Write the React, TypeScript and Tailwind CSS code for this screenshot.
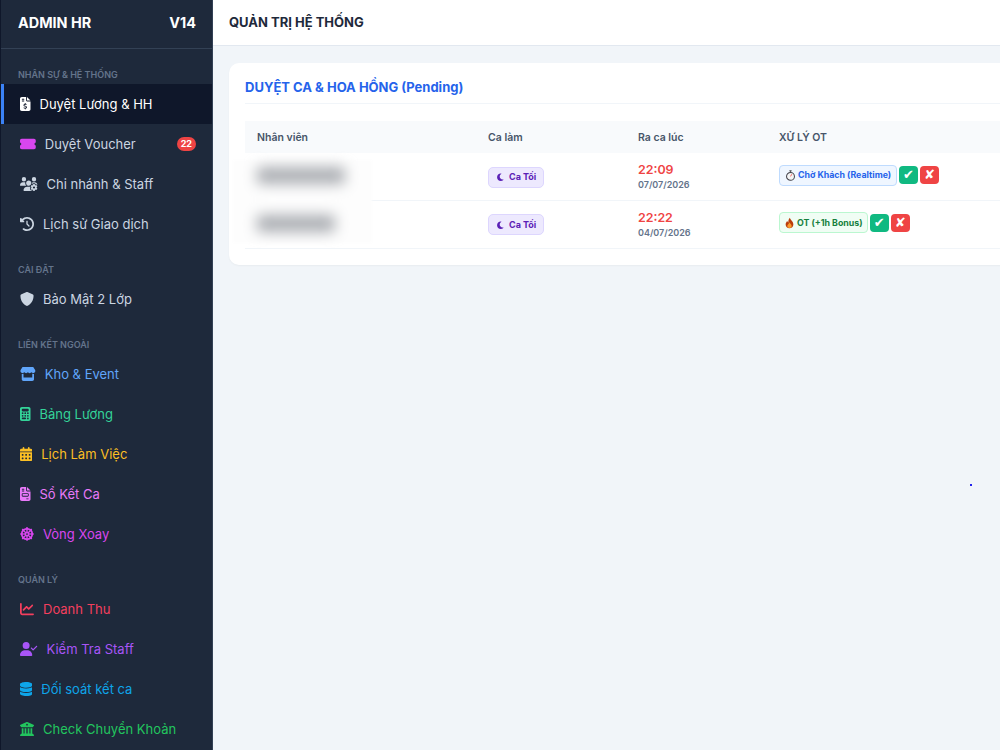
import React from "react";
import {
  FaCalculator,
  FaCalendarDays,
  FaChartLine,
  FaClockRotateLeft,
  FaDatabase,
  FaDharmachakra,
  FaFileInvoice,
  FaFileInvoiceDollar,
  FaMoon,
  FaShield,
  FaStore,
  FaTicketSimple,
  FaBuildingColumns,
  FaUserCheck,
  FaUsersGear,
} from "react-icons/fa6";

type Item = {
  label: string;
  icon: React.ComponentType<{ className?: string }>;
  iconWidth: string;
  color: string;
  iconColor?: string;
  active?: boolean;
  badge?: string;
};

const sections: { title: string; items: Item[] }[] = [
  {
    title: "NHÂN SỰ & HỆ THỐNG",
    items: [
      { label: "Duyệt Lương & HH", icon: FaFileInvoiceDollar, iconWidth: "w-[10.5px]", color: "text-white", active: true },
      { label: "Duyệt Voucher", icon: FaTicketSimple, iconWidth: "w-[15.75px]", color: "text-[#cbd5e1]", iconColor: "text-[#d946ef]", badge: "22" },
      { label: "Chi nhánh & Staff", icon: FaUsersGear, iconWidth: "w-[17.5px]", color: "text-[#cbd5e1]" },
      { label: "Lịch sử Giao dịch", icon: FaClockRotateLeft, iconWidth: "w-[14px]", color: "text-[#cbd5e1]" },
    ],
  },
  {
    title: "CÀI ĐẶT",
    items: [{ label: "Bảo Mật 2 Lớp", icon: FaShield, iconWidth: "w-[14px]", color: "text-[#cbd5e1]" }],
  },
  {
    title: "LIÊN KẾT NGOÀI",
    items: [
      { label: "Kho & Event", icon: FaStore, iconWidth: "w-[15.75px]", color: "text-[#60a5fa]" },
      { label: "Bảng Lương", icon: FaCalculator, iconWidth: "w-[10.5px]", color: "text-[#34d399]" },
      { label: "Lịch Làm Việc", icon: FaCalendarDays, iconWidth: "w-[12.25px]", color: "text-[#fbbf24]" },
      { label: "Sổ Kết Ca", icon: FaFileInvoice, iconWidth: "w-[10.5px]", color: "text-[#e879f9]" },
      { label: "Vòng Xoay", icon: FaDharmachakra, iconWidth: "w-[14px]", color: "text-[#d946ef]" },
    ],
  },
  {
    title: "QUẢN LÝ",
    items: [
      { label: "Doanh Thu", icon: FaChartLine, iconWidth: "w-[14px]", color: "text-[#f43f5e]" },
      { label: "Kiểm Tra Staff", icon: FaUserCheck, iconWidth: "w-[17.5px]", color: "text-[#a855f7]" },
      { label: "Đối soát kết ca", icon: FaDatabase, iconWidth: "w-[12.25px]", color: "text-[#0ea5e9]" },
      { label: "Check Chuyển Khoản", icon: FaBuildingColumns, iconWidth: "w-[14px]", color: "text-[#22c55e]" },
    ],
  },
];

const rows = [
  { time: "22:09", date: "07/07/2026", kind: "wait" },
  { time: "22:22", date: "04/07/2026", kind: "ot" },
];

const Stopwatch = () => (
  <svg viewBox="0 0 12 12" className="h-[11px] w-[11px] shrink-0">
    <rect x="4.8" y="0.3" width="2.4" height="1.2" fill="#3f3f46" />
    <rect x="5.5" y="1.3" width="1" height="1.2" fill="#3f3f46" />
    <circle cx="6" cy="7" r="4.3" fill="#f4f4f5" stroke="#3f3f46" strokeWidth="1.1" />
    <path d="M6 7 7.4 4.6" stroke="#ef4444" strokeWidth="0.9" />
  </svg>
);

const Fire = () => (
  <svg viewBox="0 0 12 12" className="h-[12px] w-[11px] shrink-0">
    <path d="M6.4.4C6.8 2.6 10.2 4.2 10.2 7.6 10.2 10 8.3 11.7 6 11.7 3.7 11.7 1.8 10 1.8 7.6 1.8 5.9 2.9 4.7 3.6 3.9 3.8 4.8 4.2 5.2 4.8 5.4 4.6 3.6 5.2 1.6 6.4.4Z" fill="#b93c0c" />
    <path d="M6.1 5.2C6.4 6.8 8.4 7.6 8.4 9.3 8.4 10.6 7.3 11.4 6 11.4 4.7 11.4 3.6 10.6 3.6 9.3 3.6 7.7 5.5 7 6.1 5.2Z" fill="#fb9a2c" />
  </svg>
);

const Sidebar = () => (
  <aside className="h-screen w-[213px] shrink-0 overflow-hidden border-l border-l-[#0f172a] border-r border-r-[#334155] bg-[#1e293b]">
    <div className="flex h-[49px] items-center justify-between border-b border-[#334155] pb-[2px] pl-[17px] pr-[16px] text-[14.4px] font-bold text-white">
      <span>ADMIN HR</span>
      <span>V14</span>
    </div>
    {sections.map((s) => (
      <div key={s.title} className="pt-[20px]">
        <div className="h-[15px] pl-[17px] text-[9px] leading-[11px] font-semibold text-[#64748b]">{s.title}</div>
        {s.items.map((it) => (
          <div
            key={it.label}
            className={`flex h-[40px] items-center pr-[16px] text-[13px] ${it.color} ${
              it.active ? "border-l-[3px] border-[#3b82f6] bg-[#0f172a] pl-[16px]" : "pl-[19px]"
            }`}
          >
            <it.icon className={`mr-[9px] mb-[1px] h-[14px] shrink-0 ${it.iconWidth} ${it.iconColor ?? ""}`} />
            <span className="mt-[2px]">{it.label}</span>
            {it.badge && (
              <span className="ml-auto rounded-full bg-[#ef4444] px-[4px] text-[9px] leading-[14px] font-bold text-white">
                {it.badge}
              </span>
            )}
          </div>
        ))}
      </div>
    ))}
  </aside>
);

const Row = ({ time, date, kind }: { time: string; date: string; kind: string }) => (
  <tr className="h-[47.5px] border-b border-[#f1f5f9]">
    <td className="px-3" />
    <td className="pb-[2px] align-middle">
      <span className="inline-flex h-[21px] items-center gap-[5px] rounded-[5px] border border-[#ddd6fe] bg-[#ede9fe] px-[6.5px] align-middle text-[9px] font-bold text-[#5b21b6]">
        <FaMoon className="text-[8.5px]" />
        Ca Tối
      </span>
    </td>
    <td className="pt-[1px] align-middle">
      <div className="text-[12.4px] leading-[15px] font-semibold text-[#ef4444]">{time}</div>
      <div className="text-[9px] leading-[15px] font-semibold text-[#64748b]">{date}</div>
    </td>
    <td className="pb-[3px] align-middle">
      <div className="flex items-center gap-[2.5px]">
        {kind === "wait" ? (
          <span className="inline-flex h-[21px] items-center gap-[2.5px] rounded-[4px] border border-[#bfdbfe] bg-[#eff6ff] px-[4.5px] text-[8.8px] font-bold text-[#2563eb]">
            <Stopwatch />
            Chờ Khách (Realtime)
          </span>
        ) : (
          <span className="inline-flex h-[21px] items-center gap-[2px] rounded-[4px] border border-[#bbf7d0] bg-[#f0fdf4] px-[4px] text-[8.8px] font-bold text-[#15803d]">
            <Fire />
            OT (+1h Bonus)
          </span>
        )}
        <button className="flex h-[18px] w-[18.5px] items-center justify-center rounded-[4px] bg-[#10b981] font-['DejaVu_Sans',sans-serif] text-[13px] font-bold text-white">
          ✔
        </button>
        <button className="flex h-[18px] w-[18.5px] items-center justify-center rounded-[4px] bg-[#ef4444] font-['DejaVu_Sans',sans-serif] text-[13px] font-bold text-white">
          ✘
        </button>
      </div>
    </td>
  </tr>
);

export default function App() {
  return (
    <div className="relative flex h-screen overflow-hidden bg-[#f1f5f9] font-['Inter',sans-serif]">
      <Sidebar />
      <main className="min-w-0 flex-1">
        <header className="flex h-[46px] items-center border-b border-[#e2e8f0] bg-white pl-[16px] text-[13px] font-bold text-[#1e293b]">
          QUẢN TRỊ HỆ THỐNG
        </header>
        <div className="pl-[16px] pt-[17px]">
          <section className="w-[900px] rounded-[10px] bg-white px-[16px] pt-[16px] pb-[16px] shadow-[0_1px_2px_rgba(0,0,0,0.04)]">
            <h2 className="h-[25px] border-b border-[#f1f5f9] text-[13px] leading-[17px] font-bold text-[#2563eb]">
              DUYỆT CA & HOA HỒNG (Pending)
            </h2>
            <div className="relative mt-[17px]">
              <table className="w-full table-fixed border-collapse">
                <colgroup>
                  <col className="w-[243px]" />
                  <col className="w-[150px]" />
                  <col className="w-[141px]" />
                  <col />
                </colgroup>
                <thead>
                  <tr className="h-[32px] bg-[#f8fafc] text-left text-[10.5px] text-[#475569]">
                    <th className="px-3 pt-[1px] font-semibold">Nhân viên</th>
                    <th className="pt-[1px] font-semibold">Ca làm</th>
                    <th className="pt-[1px] font-semibold">Ra ca lúc</th>
                    <th className="pt-[1px] font-semibold">XỬ LÝ OT</th>
                  </tr>
                </thead>
                <tbody>
                  {rows.map((r) => (
                    <Row key={r.time} {...r} />
                  ))}
                </tbody>
              </table>
              {/* names are blurred out in the picture */}
              <div className="absolute top-[39px] left-[-12px] h-[83px] w-[139px] bg-[#fdfdfd] blur-[1px]">
                <div className="absolute top-[7px] left-[24px] h-[17px] w-[88px] rounded bg-[#aaadb2] blur-[7px]" />
                <div className="absolute top-[55px] left-[24px] h-[17px] w-[78px] rounded bg-[#aaadb2] blur-[7px]" />
              </div>
            </div>
          </section>
        </div>
      </main>
      <div className="absolute top-[484px] left-[970px] h-[2px] w-[2px] bg-[#2222ee]" />
    </div>
  );
}
